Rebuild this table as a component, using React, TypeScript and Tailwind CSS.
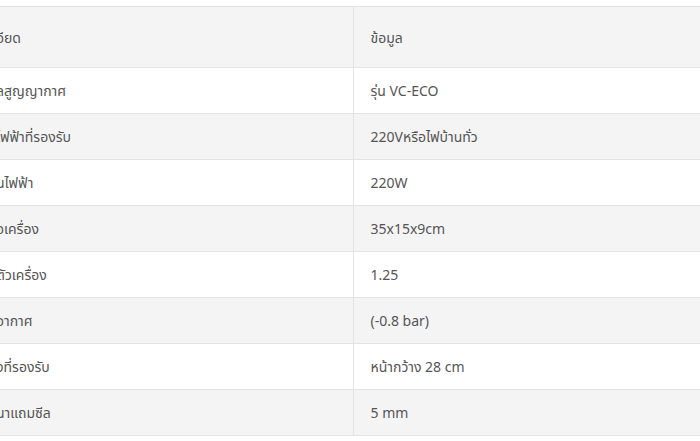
const rows: [string, string][] = [
  ["ลสูญญากาศ", "รุ่น VC-ECO"],
  ["ไฟฟ้าที่รองรับ", "220Vหรือไฟบ้านทั่ว"],
  ["นไฟฟ้า", "220W"],
  ["อเครื่อง", "35x15x9cm"],
  ["ตัวเครื่อง", "1.25"],
  ["อากาศ", "(-0.8 bar)"],
  ["งที่รองรับ", "หน้ากว้าง 28 cm"],
  ["นาแถมซีล", "5 mm"],
];

export default function App() {
  return (
    <div className="w-[700px] h-[441px] overflow-hidden bg-white pt-[6px] font-['Noto_Sans','Noto_Sans_Thai',sans-serif] text-[14px] text-[#555]">
      <table className="-ml-[21px] w-[820px] border-collapse">
        <thead>
          <tr className="h-[61px] bg-[#f4f4f4] border-y border-[#e3e3e3]">
            <th className="w-[374px] border-r border-[#e3e3e3] px-[17px] text-left font-normal">
              อียด
            </th>
            <th className="px-[17px] text-left font-normal">ข้อมูล</th>
          </tr>
        </thead>
        <tbody>
          {rows.map(([label, value], i) => (
            <tr
              key={label}
              className={`h-[46px] border-b border-[#e3e3e3] ${i % 2 === 1 ? "bg-[#f4f4f4]" : "bg-white"}`}
            >
              <td className="border-r border-[#e3e3e3] px-[17px]">{label}</td>
              <td className="px-[17px]">{value}</td>
            </tr>
          ))}
        </tbody>
      </table>
    </div>
  );
}
